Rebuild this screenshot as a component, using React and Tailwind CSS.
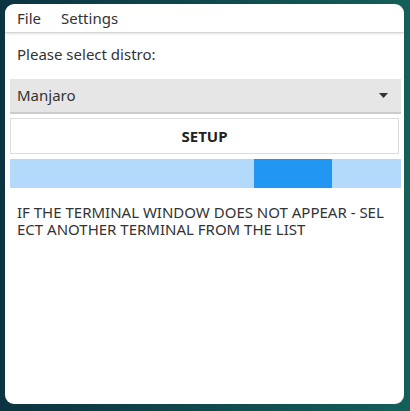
export default function App() {
  return (
    <div className="w-[410px] h-[411px] bg-gradient-to-r from-[#0c3341] to-[#145f59] pt-[4px] pl-[5px]" style={{ fontFamily: '"Noto Sans", sans-serif' }}>
      <div className="w-[399px] h-[400px] bg-white rounded-[9px] overflow-hidden flex flex-col text-[#333]">
        <div className="h-[29px] flex items-center gap-[20px] px-[12px] text-[15px] border-b border-[#d6d6d6] shadow-[0_1px_2px_rgba(0,0,0,0.12)]">
          <span>File</span>
          <span>Settings</span>
        </div>
        <div className="pl-[12px] mt-[10px] text-[15px] leading-[22px]">Please select distro:</div>
        <div className="ml-[5px] mr-[3px] mt-[14px] h-[35px] bg-[#e6e6e6] border-b-2 border-[#cccccc] flex items-center justify-between pl-[7px] pr-[13px] text-[15px]">
          <span>Manjaro</span>
          <svg width="9" height="5" viewBox="0 0 9 5"><path d="M0 0h9L4.5 5z" fill="#333" /></svg>
        </div>
        <button className="ml-[5px] mr-[5px] mt-[4px] h-[36px] bg-white border border-[#dddddd] text-[15px] font-bold text-[#222] flex items-center justify-center">
          SETUP
        </button>
        <div className="ml-[5px] mr-[3px] mt-[5px] h-[29px] bg-[#b3dafa] flex">
          <div className="ml-[244px] w-[78px] bg-[#2196f3]" />
        </div>
        <div className="pl-[12px] pr-[12px] mt-[16px] text-[15px] leading-[17px] break-all text-[#333]">
          IF THE TERMINAL WINDOW DOES NOT APPEAR - SELECT ANOTHER TERMINAL FROM THE LIST
        </div>
      </div>
    </div>
  );
}
